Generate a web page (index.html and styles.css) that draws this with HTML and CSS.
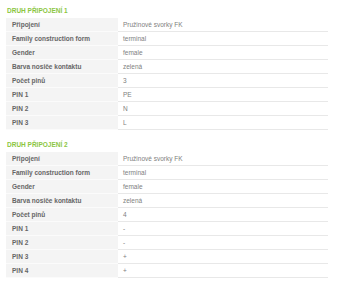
FILE: index.html
```html
<!DOCTYPE html>
<html lang="cs">
<head>
<meta charset="utf-8">
<link rel="stylesheet" href="styles.css">
</head>
<body>
<div class="page">
  <section class="group">
    <h3 class="group-title">DRUH PŘIPOJENÍ 1</h3>
    <table class="spec">
      <tr><th>Připojení</th><td>Pružinové svorky FK</td></tr>
      <tr><th>Family construction form</th><td>terminal</td></tr>
      <tr><th>Gender</th><td>female</td></tr>
      <tr><th>Barva nosiče kontaktu</th><td>zelená</td></tr>
      <tr><th>Počet pinů</th><td>3</td></tr>
      <tr><th>PIN 1</th><td>PE</td></tr>
      <tr><th>PIN 2</th><td>N</td></tr>
      <tr><th>PIN 3</th><td>L</td></tr>
    </table>
  </section>
  <section class="group">
    <h3 class="group-title">DRUH PŘIPOJENÍ 2</h3>
    <table class="spec">
      <tr><th>Připojení</th><td>Pružinové svorky FK</td></tr>
      <tr><th>Family construction form</th><td>terminal</td></tr>
      <tr><th>Gender</th><td>female</td></tr>
      <tr><th>Barva nosiče kontaktu</th><td>zelená</td></tr>
      <tr><th>Počet pinů</th><td>4</td></tr>
      <tr><th>PIN 1</th><td>-</td></tr>
      <tr><th>PIN 2</th><td>-</td></tr>
      <tr><th>PIN 3</th><td>+</td></tr>
      <tr><th>PIN 4</th><td>+</td></tr>
    </table>
  </section>
</div>
</body>
</html>
```
FILE: styles.css
```css
html, body {
  margin: 0;
  padding: 0;
  background: #ffffff;
}

body {
  font-family: "Liberation Sans", Arial, sans-serif;
  font-size: 6.5px;
}

.page {
  padding: 6px 12px 0 6px;
  display: flex;
  flex-direction: column;
  gap: 10px;
}

.group-title {
  margin: 0 0 3px 1px;
  font-size: 6.5px;
  line-height: 9px;
  font-weight: bold;
  color: #8cc63f;
}

.spec {
  width: 322px;
  border-collapse: collapse;
  border-spacing: 0;
  table-layout: fixed;
}

.spec th,
.spec td {
  height: 13px;
  padding: 0;
  line-height: 13px;
  text-align: left;
  vertical-align: middle;
  white-space: nowrap;
}

.spec th {
  width: 106px;
  padding-left: 6px;
  background: #f4f4f4;
  color: #666666;
  font-weight: bold;
  border-bottom: 1px solid #fbfbfb;
}

.spec td {
  padding-left: 5px;
  color: #808080;
  font-weight: normal;
  border-bottom: 1px solid #e8e8e8;
}
```
